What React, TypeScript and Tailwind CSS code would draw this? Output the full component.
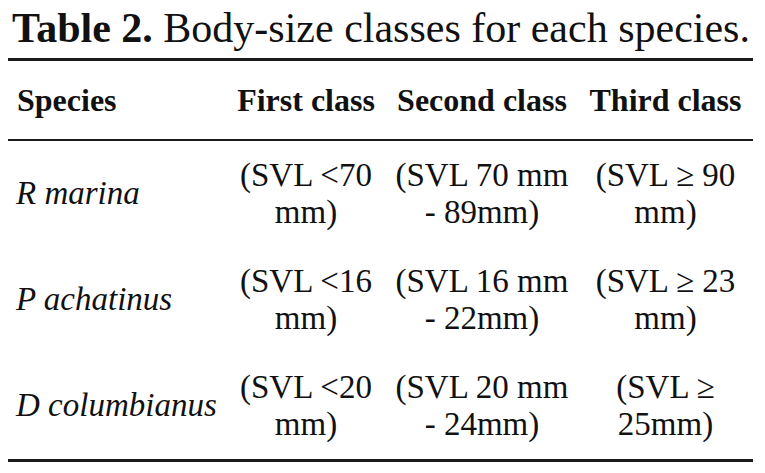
const rows = [
  {
    name: "R marina",
    cells: [
      ["(SVL <70", "mm)"],
      ["(SVL 70 mm", "- 89mm)"],
      ["(SVL ≥ 90", "mm)"],
    ],
  },
  {
    name: "P achatinus",
    cells: [
      ["(SVL <16", "mm)"],
      ["(SVL 16 mm", "- 22mm)"],
      ["(SVL ≥ 23", "mm)"],
    ],
  },
  {
    name: "D columbianus",
    cells: [
      ["(SVL <20", "mm)"],
      ["(SVL 20 mm", "- 24mm)"],
      ["(SVL ≥", "25mm)"],
    ],
  },
];

const headers = ["First class", "Second class", "Third class"];

const App = () => {
  return (
    <div className="w-[765px] h-[473px] bg-white text-[#111] font-[family-name:Liberation_Serif,Times_New_Roman,serif] overflow-hidden">
      <div className="pl-[12px] pt-[3px] h-[58px] text-[42px] leading-[50px] whitespace-nowrap">
        <span className="font-bold">Table 2.</span> Body-size classes for each species.
      </div>

      <div className="ml-[8px] w-[745px] border-t-[3px] border-b-[3px] border-[#1a1a1a]">
        <div className="grid grid-cols-[218px_160px_192px_175px] h-[80px] items-center border-b-[2px] border-[#1a1a1a] text-[32px] font-bold">
          <div className="pl-[9px]">Species</div>
          {headers.map((h) => (
            <div key={h} className="text-center whitespace-nowrap">{h}</div>
          ))}
        </div>

        {rows.map((row) => (
          <div key={row.name} className="grid grid-cols-[218px_160px_192px_175px] h-[106px] items-center text-[33px]">
            <div className="pl-[8px] italic whitespace-nowrap">{row.name}</div>
            {row.cells.map((c, i) => (
              <div key={i} className="text-center leading-[37px] whitespace-nowrap">
                {c[0]}
                <br />
                {c[1]}
              </div>
            ))}
          </div>
        ))}
      </div>
    </div>
  );
};

export default App;
